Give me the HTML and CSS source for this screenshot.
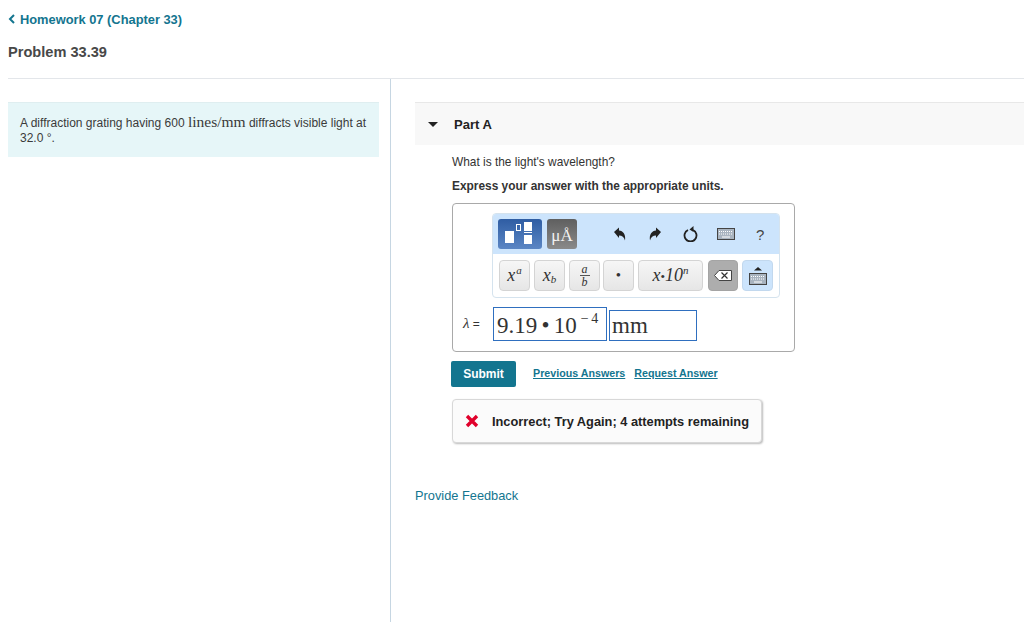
FILE: index.html
```html
<!DOCTYPE html>
<html lang="en">
<head>
    <meta charset="UTF-8">
    <title>Problem 33.39</title>
    <link rel="stylesheet" href="styles.css">
</head>
<body>

<div class="top">
    <a class="back" href="#">
        <svg class="back-icon" width="8" height="10" viewBox="0 0 8 10"><path d="M6 1 2 5l4 4" fill="none" stroke="#13758f" stroke-width="2"/></svg>
        Homework 07 (Chapter 33)
    </a>
    <h1 class="title">Problem 33.39</h1>
</div>

<div class="main">
    <div class="left">
        <div class="intro">A diffraction grating having 600 <span class="math">lines/mm</span> diffracts visible light at<br>32.0 °.</div>
    </div>

    <div class="right">
        <div class="part-head">
            <svg class="caret" width="10" height="5" viewBox="0 0 10 5"><path d="M0 0h10L5 5z" fill="#222"/></svg>
            <span>Part A</span>
        </div>

        <div class="part-body">
            <p class="question">What is the light's wavelength?</p>
            <p class="express">Express your answer with the appropriate units.</p>

            <div class="answer-box">
                <div class="toolbar">
                    <div class="tool-top">
                        <div class="tpl-btn">
                            <svg width="44" height="30" viewBox="0 0 44 30">
                                <rect x="7" y="12" width="9" height="12" fill="#fff"/>
                                <rect x="18.500" y="5.500" width="4" height="6" fill="none" stroke="#fff"/>
                                <rect x="26" y="3" width="8" height="9" fill="#fff"/>
                                <rect x="26" y="13" width="8" height="1" fill="#fff"/>
                                <rect x="26" y="16" width="8" height="9" fill="#fff"/>
                            </svg>
                        </div>
                        <div class="unit-btn">μÅ</div>
                        <div class="tool-icons">
                            <svg width="14" height="14" viewBox="0 0 14 14"><path d="M1 5 6 .5v3c4 .3 7 3.800 6 10-1-3.500-2.800-5-6-5V11z" fill="#222"/></svg>
                            <svg width="14" height="14" viewBox="0 0 14 14"><path d="M13 5 8 .5v3c-4 .3-7 3.800-6 10 1-3.500 2.800-5 6-5V11z" fill="#222"/></svg>
                            <svg class="redo" width="15" height="16" viewBox="0 0 15 16"><path d="M5 4a6 6 0 1 0 5 0" fill="none" stroke="#222" stroke-width="1.800"/><path d="M10.500 0v6l-4-2.500z" fill="#222"/></svg>
                            <svg class="kbd" width="18" height="12" viewBox="0 0 18 12"><rect x=".5" y=".5" width="17" height="11" fill="#a9b4c0" stroke="#444"/><path d="M2 3.500h14M2 6h14" stroke="#fff" stroke-dasharray="1 1"/><path d="M5 9h8" stroke="#fff"/></svg>
                            <span class="help">?</span>
                        </div>
                    </div>
                    <div class="tool-bottom">
                        <div class="key key-1"><span><i>x</i><sup>a</sup></span></div>
                        <div class="key key-2"><span><i>x</i><sub>b</sub></span></div>
                        <div class="key key-3"><span class="frac"><i>a</i><i>b</i></span></div>
                        <div class="key key-4">•</div>
                        <div class="key key-5"><span><i>x</i><span class="dot">•</span><i>10</i><sup>n</sup></span></div>
                        <div class="key key-del">
                            <svg width="18" height="11" viewBox="0 0 18 11"><path d="M5 .5h12.500v10H5L.5 5.500z" fill="#fff" stroke="#444"/><path d="m7.500 2.500 6 6m0-6-6 6" stroke="#333" stroke-width="1.200"/></svg>
                        </div>
                        <div class="key key-kbd">
                            <svg width="18" height="20" viewBox="0 0 18 20"><path d="M5 4.500 9 1l4 3.500z" fill="#222"/><rect x=".5" y="7.500" width="17" height="11" fill="#a9b4c0" stroke="#444"/><path d="M2 10.500h14M2 13h14" stroke="#fff" stroke-dasharray="1 1"/><path d="M5 16h8" stroke="#fff"/></svg>
                        </div>
                    </div>
                </div>

                <div class="answer-row">
                    <span class="lambda"><i>λ</i> =</span>
                    <div class="input-val">9.19 • 10<sup>− 4</sup></div>
                    <div class="input-unit">mm</div>
                </div>
            </div>

            <div class="actions">
                <button class="submit">Submit</button>
                <a class="link" href="#">Previous Answers</a>
                <a class="link" href="#">Request Answer</a>
            </div>

            <div class="feedback">
                <svg width="14" height="14" viewBox="0 0 14 14"><path d="M2 2l10 10M12 2 2 12" stroke="#e0002b" stroke-width="3.400"/></svg>
                <span>Incorrect; Try Again; 4 attempts remaining</span>
            </div>
        </div>

        <a class="provide" href="#">Provide Feedback</a>
    </div>
</div>

</body>
</html>
```

FILE: styles.css
```css
body{
    margin: 0;
    height: 622px;
    overflow: hidden;
    font-family: "Liberation Sans", Arial, sans-serif;
    font-size: 12px;
    color: #333;
    background-color: #fff;
}

/* -----------------------------HEADER------------------------------ */
.top{
    margin-left: 8px;
    height: 78px;
    border-bottom: 1px solid #e3e6ea;
    box-sizing: content-box;
}
.back{
    display: flex;
    align-items: center;
    gap: 4px;
    padding-top: 12px;
    height: 14px;
    color: #13758f;
    font-weight: bold;
    font-size: 12.850px;
    text-decoration: none;
}
.title{
    margin: 18px 0 0;
    font-size: 14.600px;
    line-height: 16px;
    color: #484848;
}

/* -----------------------------LAYOUT------------------------------ */
.main{
    display: flex;
    height: 543px;
}
.left{
    width: 383px;
    margin-left: 8px;
    padding-top: 23px;
    box-sizing: border-box;
    border-right: 1px solid #c6d6e2;
    padding-right: 11px;
}
.intro{
    height: 55px;
    box-sizing: border-box;
    border-top: 1px solid #dfeef0;
    padding: 11px 12px 0;
    background-color: #e6f6f8;
    line-height: 15px;
    font-size: 12px;
    color: #3a3a3a;
}
.math{
    font-family: "Liberation Serif", serif;
    font-size: 15.500px;
    line-height: 1;
}
.right{
    flex: 1;
    margin-left: 24px;
    padding-top: 23px;
}

/* -----------------------------PART------------------------------ */
.part-head{
    display: flex;
    align-items: center;
    height: 42px;
    border-top: 1px solid #e8e8e8;
    background-color: #f8f8f8;
    font-size: 13px;
    font-weight: bold;
    color: #222;
}
.caret{
    margin-left: 13px;
    margin-right: 16px;
}
.part-body{
    margin-left: 37px;
}
.question{
    margin: 10px 0 0;
    line-height: 14px;
    font-size: 11.900px;
    color: #333;
}
.express{
    margin: 10px 0 0;
    line-height: 14px;
    font-size: 11.900px;
    font-weight: bold;
    color: #333;
}

/* -----------------------------ANSWER BOX------------------------------ */
.answer-box{
    width: 343px;
    height: 149px;
    margin-top: 10px;
    box-sizing: border-box;
    border: 1px solid #a9a9a9;
    border-radius: 4px;
    padding-top: 9px;
}
.toolbar{
    width: 288px;
    height: 85px;
    margin-left: 39px;
    box-sizing: border-box;
    border: 1px solid #d5e3ee;
    border-radius: 4px;
    overflow: hidden;
}
.tool-top{
    display: flex;
    align-items: center;
    height: 40px;
    padding-left: 5px;
    background-color: #cce4fc;
}
.tpl-btn{
    display: flex;
    width: 44px;
    height: 30px;
    border-radius: 3px;
    background: linear-gradient(#2f5da3, #5b86c4);
}
.unit-btn{
    width: 30px;
    height: 30px;
    margin-left: 5px;
    border-radius: 3px;
    background: linear-gradient(#5f5f5f, #8a8a8a);
    color: #f2f2f2;
    font-family: "Liberation Serif", serif;
    font-size: 17px;
    line-height: 34px;
    text-align: center;
}
.tool-icons{
    display: flex;
    align-items: center;
    margin-left: 36px;
}
.tool-icons svg{
    margin-right: 21px;
}
.tool-icons .redo{
    margin-right: 19px;
}
.tool-icons .kbd{
    margin-right: 21px;
}
.help{
    font-size: 15px;
    color: #444;
}
.tool-bottom{
    display: flex;
    gap: 4px;
    padding: 6px 0 0 6px;
}
.key{
    display: flex;
    align-items: center;
    justify-content: center;
    height: 31px;
    box-sizing: border-box;
    border: 1px solid #d4d4d4;
    border-radius: 4px;
    background: linear-gradient(#f6f6f6, #e6e6e6);
    font-family: "Liberation Serif", serif;
    font-size: 18px;
    color: #333;
}
.key sup, .key sub{
    font-size: 11px;
    font-style: italic;
    line-height: 0;
}
.key sub{
    vertical-align: -2px;
}
.key-1 sup{
    margin-left: 1px;
}
.key-1, .key-2, .key-3, .key-4{
    width: 31px;
}
.key-3{
    margin-right: -1px;
}
.key-4{
    font-size: 15px;
}
.key-5{
    width: 65px;
}
.dot{
    font-size: 13px;
}
.key-del{
    width: 30px;
    margin-left: 1px;
    background: #adadad;
    border-color: #a4a4a4;
}
.key-kbd{
    width: 31px;
    background: #cce4fc;
    border-color: #c2d8ee;
}
.frac{
    display: flex;
    flex-direction: column;
    font-size: 12px;
    line-height: 12px;
    text-align: center;
}
.frac i:first-child{
    border-bottom: 1px solid #555;
    padding: 0 2px;
}

/* -----------------------------INPUTS------------------------------ */
.answer-row{
    display: flex;
    align-items: flex-end;
    margin-top: 9px;
    margin-left: 10px;
    font-family: "Liberation Serif", serif;
    color: #333;
}
.lambda{
    width: 30px;
    padding-bottom: 9px;
    font-size: 12px;
    font-family: "Liberation Sans", sans-serif;
}
.lambda i{
    font-family: "Liberation Serif", serif;
    font-size: 15px;
}
.input-val{
    width: 114px;
    height: 34px;
    box-sizing: border-box;
    border: 1px solid #2f6fbf;
    padding-left: 3px;
    font-size: 23px;
    line-height: 35px;
    white-space: nowrap;
    word-spacing: -1.500px;
}
.input-val sup{
    font-size: 14px;
    line-height: 0;
    vertical-align: 10px;
    margin-left: 4px;
    word-spacing: -1px;
}
.input-unit{
    width: 88px;
    height: 31px;
    margin-left: 2px;
    box-sizing: border-box;
    border: 1px solid #2f6fbf;
    padding-left: 2px;
    font-size: 23px;
    line-height: 30px;
}

/* -----------------------------ACTIONS------------------------------ */
.actions{
    display: flex;
    align-items: center;
    margin-top: 9px;
    margin-left: -1px;
    height: 26px;
}
.submit{
    width: 65px;
    height: 26px;
    margin-right: 17px;
    border: none;
    border-radius: 2px;
    background-color: #13758f;
    color: #fff;
    font-family: "Liberation Sans", sans-serif;
    font-size: 12px;
    font-weight: bold;
}
.link{
    margin-right: 9px;
    padding-bottom: 2px;
    color: #13758f;
    font-size: 10.700px;
    font-weight: bold;
}
.feedback{
    display: flex;
    align-items: center;
    gap: 13px;
    width: 310px;
    height: 44px;
    margin-top: 12px;
    padding-left: 12px;
    box-sizing: border-box;
    border: 1px solid #d8d8d8;
    border-radius: 4px;
    background-color: #fbfbfb;
    box-shadow: 1px 1px 2px #bbb;
    font-size: 12.800px;
    font-weight: bold;
    color: #222;
}
.provide{
    display: block;
    margin-top: 45px;
    color: #13758f;
    font-size: 12.800px;
    text-decoration: none;
}
```
